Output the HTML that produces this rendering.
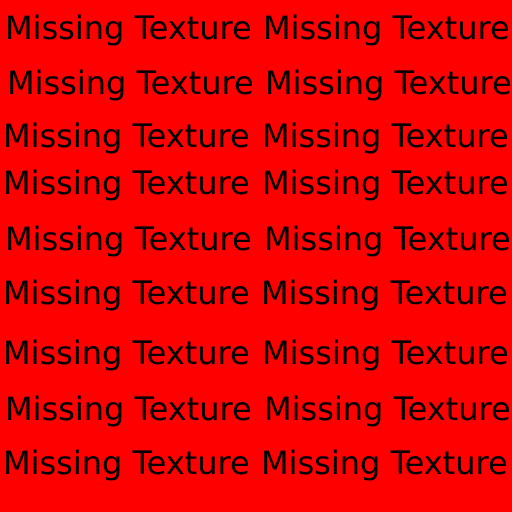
<!DOCTYPE html>
<html><head><style>
html,body{margin:0;padding:0;width:512px;height:512px;overflow:hidden;background:#ff0000;}
div{position:absolute;font-family:"DejaVu Sans",sans-serif;font-size:32px;line-height:31px;color:#000;white-space:nowrap;}
</style></head><body>
<div style="left:5px;top:13px">Missing Texture</div><div style="left:263px;top:13px">Missing Texture</div>
<div style="left:7px;top:68px">Missing Texture</div><div style="left:265px;top:68px">Missing Texture</div>
<div style="left:3px;top:121px">Missing Texture</div><div style="left:262px;top:121px">Missing Texture</div>
<div style="left:3px;top:168px">Missing Texture</div><div style="left:262px;top:168px">Missing Texture</div>
<div style="left:5px;top:224px">Missing Texture</div><div style="left:264px;top:224px">Missing Texture</div>
<div style="left:3px;top:278px">Missing Texture</div><div style="left:261px;top:278px">Missing Texture</div>
<div style="left:3px;top:338px">Missing Texture</div><div style="left:262px;top:338px">Missing Texture</div>
<div style="left:5px;top:394px">Missing Texture</div><div style="left:264px;top:394px">Missing Texture</div>
<div style="left:3px;top:448px">Missing Texture</div><div style="left:261px;top:448px">Missing Texture</div>
</body></html>
